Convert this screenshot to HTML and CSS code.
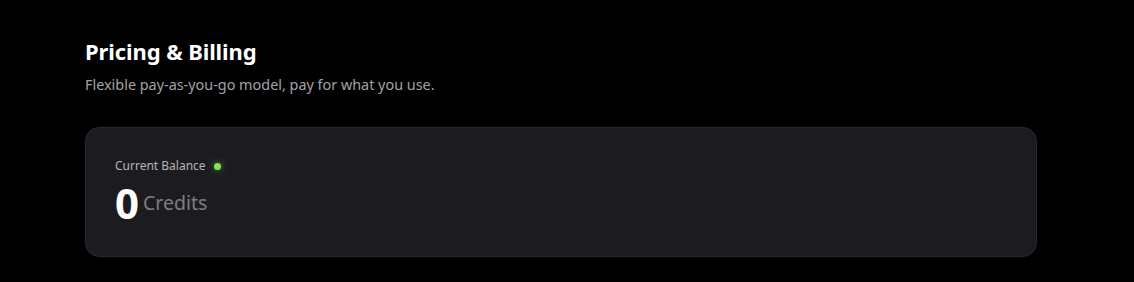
FILE: index.html
```html
<!DOCTYPE html>
<html>
<head>
<meta charset="utf-8">
<link rel="stylesheet" href="styles.css">
</head>
<body>
<main class="page">
  <header class="head">
    <h1 class="title">Pricing &amp; Billing</h1>
    <p class="subtitle">Flexible pay-as-you-go model, pay for what you use.</p>
  </header>
  <section class="card">
    <div class="label-row">
      <span class="label">Current Balance</span>
      <span class="dot"></span>
    </div>
    <div class="balance">
      <span class="amount">0</span>
      <span class="unit">Credits</span>
    </div>
  </section>
</main>
</body>
</html>
```
FILE: styles.css
```css
html, body {
  margin: 0;
  padding: 0;
  background: #000;
}
body {
  font-family: "Noto Sans", "Open Sans", sans-serif;
  color: #fff;
}
.page {
  width: 952px;
  padding: 36px 0 0 85px;
}
.head {
  display: flex;
  flex-direction: column;
  gap: 9px;
}
.title {
  margin: 0;
  font-size: 22px;
  font-weight: 700;
  line-height: 30px;
  letter-spacing: -0.1px;
}
.subtitle {
  margin: 0;
  font-size: 14.4px;
  line-height: 20px;
  color: #a3a3a8;
}
.card {
  margin-top: 32px;
  height: 130px;
  box-sizing: border-box;
  background: #1c1c20;
  border: 1px solid #2a2a2e;
  border-radius: 14px;
  padding: 30px 29px;
}
.label-row {
  display: flex;
  align-items: center;
  gap: 8px;
}
.label {
  font-size: 12px;
  line-height: 16px;
  color: #b4b4ba;
}
.dot {
  width: 7px;
  height: 7px;
  border-radius: 50%;
  background: #86e25c;
  box-shadow: 0 0 6px rgba(134, 226, 92, 0.6);
}
.balance {
  display: flex;
  align-items: center;
  gap: 4px;
  margin-top: 4px;
}
.amount {
  font-size: 42px;
  font-weight: 700;
  line-height: 50px;
  color: #fff;
}
.unit {
  font-size: 19.5px;
  line-height: 28px;
  color: #7c7c82;
}
```
